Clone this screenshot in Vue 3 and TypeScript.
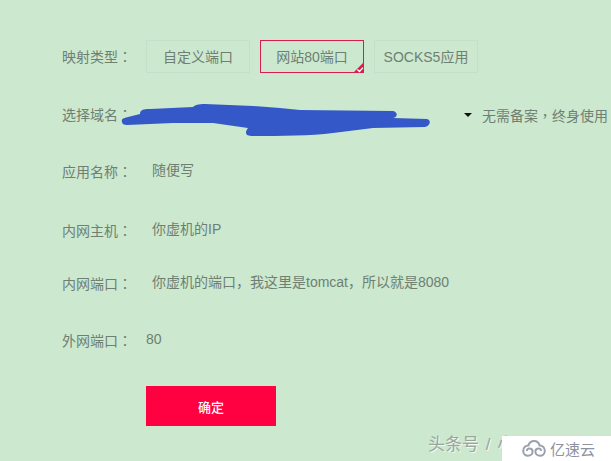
<script setup lang="ts">
const types = [
  { label: '自定义端口', active: false },
  { label: '网站80端口', active: true },
  { label: 'SOCKS5应用', active: false },
]
</script>

<template>
  <div class="page">
    <div class="form">
      <div class="row r1">
        <span class="label">映射类型<span class="tc">：</span></span>
        <div class="types">
          <div v-for="t in types" :key="t.label" class="type" :class="{ active: t.active }">
            <span class="type-text">{{ t.label }}</span>
            <svg v-if="t.active" class="corner" width="11" height="11" viewBox="0 0 11 11">
              <path d="M11 0V11H0Z" fill="#d81e4f" />
              <path d="M4.4 7.4L6.5 9.4L10 5.6" fill="none" stroke="#fff" stroke-width="1.4" />
            </svg>
          </div>
        </div>
      </div>
      <div class="row r2">
        <span class="label">选择域名<span class="tc">：</span></span>
        <div class="domain">
          <span class="arrow"></span>
          <span class="note">无需备案<span class="tc">，</span>终身使用</span>
        </div>
      </div>
      <div class="row r3">
        <span class="label">应用名称<span class="tc">：</span></span>
        <span class="value">随便写</span>
      </div>
      <div class="row r4">
        <span class="label">内网主机<span class="tc">：</span></span>
        <span class="value">你虚机的IP</span>
      </div>
      <div class="row r5">
        <span class="label">内网端口<span class="tc">：</span></span>
        <span class="value">你虚机的端口，我这里是tomcat，所以就是8080</span>
      </div>
      <div class="row r6">
        <span class="label">外网端口<span class="tc">：</span></span>
        <span class="value plain">80</span>
      </div>
      <button class="confirm" type="button">确定</button>
    </div>

    <svg class="scribble" width="611" height="461" viewBox="0 0 611 461">
      <path
        d="M122 122C121 119 123 118 128 117L140 114C140 110 143 109 150 109L193 107C195 105 198 104 205 104L253 106L280 108L300 110L393 111C398 112 398 117 393 118L427 119C431 120 431 125 425 127L373 128L333 133C310 136 280 136 253 136C246 136 244 133 248 128L213 123L173 123L127 125C124 125 122 124 122 122Z"
        fill="#3458c8"
      />
    </svg>

    <span class="mark">头条号 / 小</span>
    <div class="brand">
      <svg class="logo" width="24" height="17" viewBox="0 0 24 17" fill="none" stroke="#9aa0ad" stroke-width="2">
        <path d="M1.2 11C1.2 7.5 3.5 5.4 6.4 5.4C7.4 2.6 9.6 1.1 12 1.1C14.8 1.1 16.8 2.8 17.6 5.4C20.6 5.4 22.8 7.6 22.8 11" />
        <path d="M1.2 11C1.2 14 3.4 15.8 6 15.8C8.6 15.8 10.6 14 10.6 11.6C10.6 9.6 9 8.4 7.4 8.4C5.8 8.4 4.8 9.6 5 11" />
        <path d="M22.8 11C22.8 14 20.6 15.8 18 15.8C15.4 15.8 13.4 14 13.4 11.6C13.4 9.6 15 8.4 16.6 8.4C18.2 8.4 19.2 9.6 19 11" />
      </svg>
      <span class="brand-name">亿速云</span>
    </div>
  </div>
</template>

<style scoped>
.page {
  position: relative;
  width: 611px;
  height: 461px;
  overflow: hidden;
  background: #cce8cf;
  color: #6f7f72;
  font-family: "Liberation Sans", "Noto Sans CJK SC", sans-serif;
  font-size: 14px;
}
.form {
  display: flex;
  flex-direction: column;
  padding: 40px 0 0 62px;
}
.row {
  display: flex;
  align-items: center;
  height: 33px;
  white-space: nowrap;
}
.r2 { margin-top: 25px; }
.r3 { margin-top: 24px; }
.r4 { margin-top: 26px; }
.r5 { margin-top: 20px; }
.r6 { margin-top: 24px; }
.label {
  flex: none;
  width: 84px;
  position: relative;
  top: -1px;
}
.tc {
  font-family: "Noto Sans CJK TC", sans-serif;
}
.types {
  display: flex;
  gap: 10px;
}
.type {
  position: relative;
  width: 104px;
  height: 33px;
  box-sizing: border-box;
  display: flex;
  align-items: center;
  justify-content: center;
  border: 1px solid #c4e0c8;
  padding-bottom: 1px;
}
.type.active {
  border-color: #d81e4f;
}
.corner {
  position: absolute;
  right: -1px;
  bottom: -1px;
}
.domain {
  display: flex;
  align-items: center;
  margin-left: 318px;
}
.arrow {
  width: 0;
  height: 0;
  border-left: 4px solid transparent;
  border-right: 4px solid transparent;
  border-top: 4px solid #111;
}
.note {
  margin-left: 10px;
}
.value {
  padding-left: 6px;
  padding-bottom: 6px;
}
.value.plain {
  padding-left: 0;
  padding-bottom: 3px;
}
.confirm {
  width: 130px;
  height: 40px;
  margin: 29px 0 0 84px;
  border: none;
  background: #ff0040;
  color: #fff;
  font: inherit;
  font-size: 13px;
  font-weight: 500;
}
.scribble {
  position: absolute;
  left: 0;
  top: 0;
  pointer-events: none;
}
.mark {
  position: absolute;
  left: 428px;
  top: 434px;
  font-size: 17px;
  line-height: 22px;
  word-spacing: 2px;
  color: #9aa69c;
  text-shadow: 1px 1px 0 #f2f8f2;
  white-space: nowrap;
}
.brand {
  position: absolute;
  right: 0;
  bottom: 0;
  width: 109px;
  height: 25px;
  box-sizing: border-box;
  padding-left: 20px;
  display: flex;
  align-items: center;
  gap: 4px;
  background: #fff;
}
.logo {
  flex: none;
}
.brand-name {
  font-size: 15px;
  color: #8d93a0;
}
</style>
